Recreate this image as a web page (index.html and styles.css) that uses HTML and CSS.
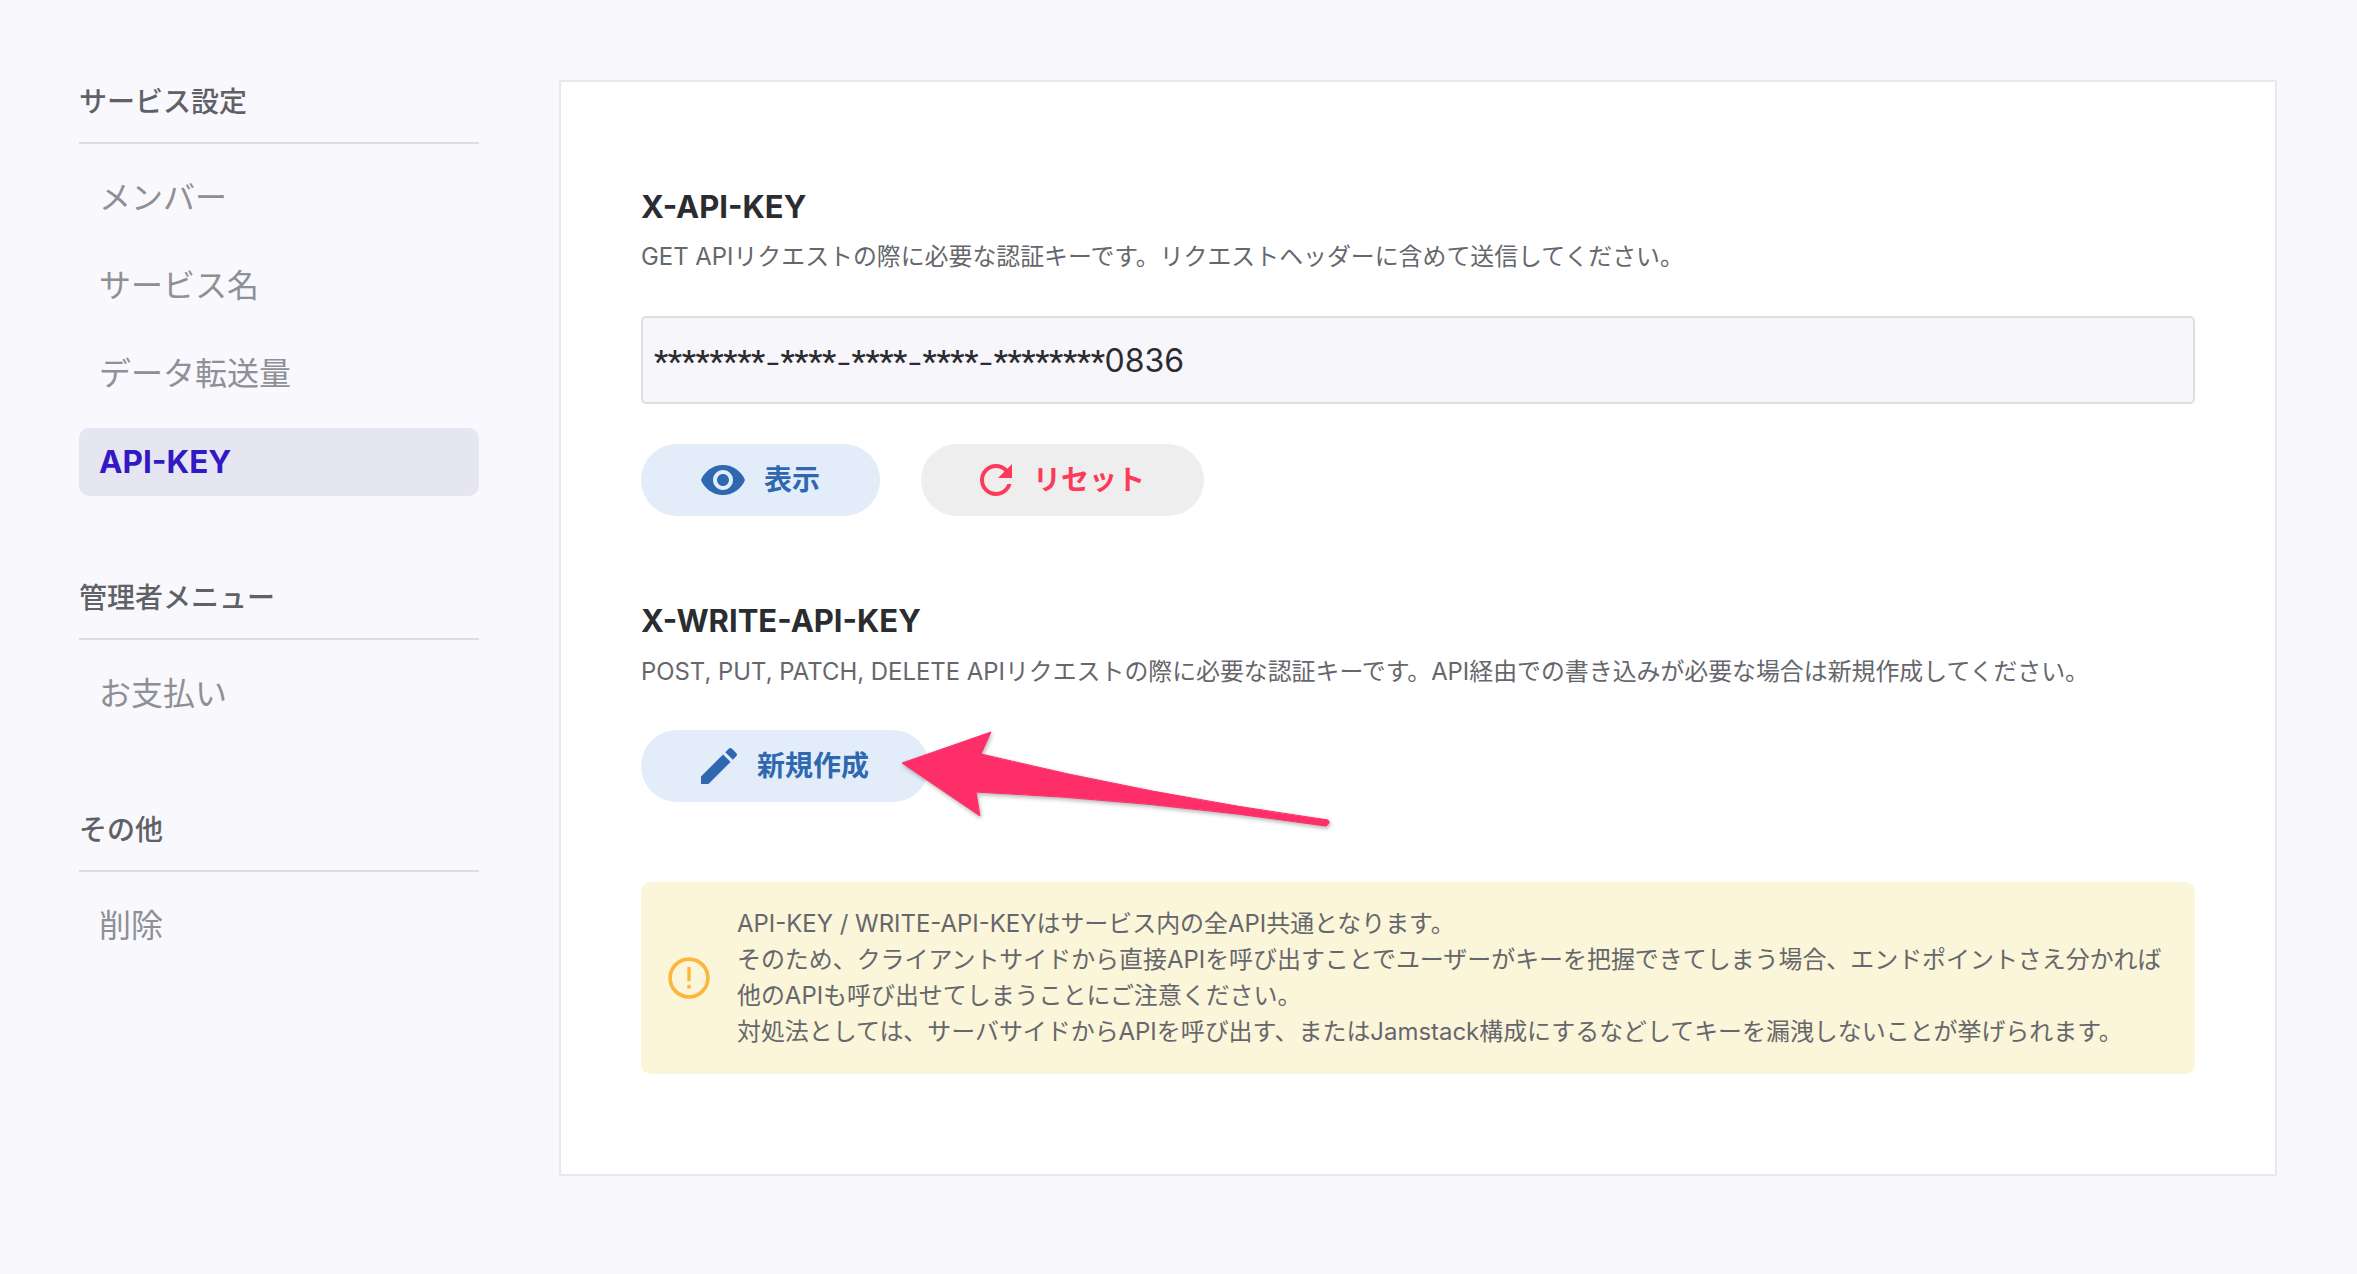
FILE: index.html
```html
<!DOCTYPE html>
<html>
<head>
    <title>API-KEY</title>
    <link rel="stylesheet" href="styles.css">
</head>
<body>
    <div class="page">
        <nav class="sidebar">
            <h3 class="side-title">サービス設定</h3>
            <a class="side-item">メンバー</a>
            <a class="side-item">サービス名</a>
            <a class="side-item">データ転送量</a>
            <a class="side-item active">API-KEY</a>

            <h3 class="side-title second">管理者メニュー</h3>
            <a class="side-item">お支払い</a>

            <h3 class="side-title third">その他</h3>
            <a class="side-item">削除</a>
        </nav>

        <main class="card">
            <h2 class="key-title">X-API-KEY</h2>
            <p class="key-desc">GET APIリクエストの際に必要な認証キーです。リクエストヘッダーに含めて送信してください。</p>
            <div class="key-input"><span class="masked">********<span class="sep">_</span>****<span class="sep">_</span>****<span class="sep">_</span>****<span class="sep">_</span>********</span>0836</div>
            <div class="btn-row">
                <button class="btn btn-show">
                    <svg class="icon" viewBox="0 0 24 24"><path d="M12 4.5C7 4.5 2.73 7.61 1 12c1.73 4.39 6 7.5 11 7.5s9.27-3.11 11-7.5c-1.73-4.39-6-7.5-11-7.5zM12 17c-2.76 0-5-2.24-5-5s2.24-5 5-5 5 2.24 5 5-2.24 5-5 5zm0-8c-1.66 0-3 1.34-3 3s1.34 3 3 3 3-1.34 3-3-1.34-3-3-3z"/></svg>
                    <span class="btn-label">表示</span>
                </button>
                <button class="btn btn-reset">
                    <svg class="icon" viewBox="0 0 24 24"><path d="M17.65 6.35C16.2 4.9 14.21 4 12 4c-4.42 0-7.99 3.58-7.99 8s3.57 8 7.99 8c3.73 0 6.84-2.55 7.73-6h-2.08c-.82 2.33-3.04 4-5.65 4-3.31 0-6-2.69-6-6s2.69-6 6-6c1.66 0 3.14.69 4.22 1.78L13 11h7V4l-2.35 2.35z"/></svg>
                    <span class="btn-label">リセット</span>
                </button>
            </div>

            <h2 class="key-title write">X-WRITE-API-KEY</h2>
            <p class="key-desc">POST, PUT, PATCH, DELETE APIリクエストの際に必要な認証キーです。API経由での書き込みが必要な場合は新規作成してください。</p>
            <div class="btn-row">
                <button class="btn btn-show btn-new">
                    <svg class="icon" viewBox="0 0 24 24"><path d="M3 17.25V21h3.75L17.81 9.94l-3.75-3.75L3 17.25zM20.71 7.04c.39-.39.39-1.02 0-1.41l-2.34-2.34c-.39-.39-1.02-.39-1.41 0l-1.83 1.83 3.75 3.75 1.83-1.83z"/></svg>
                    <span class="btn-label">新規作成</span>
                </button>
            </div>

            <div class="notice">
                <svg class="notice-icon" viewBox="0 0 40 40"><circle cx="20" cy="20" r="18" fill="none" stroke="#fbb73c" stroke-width="3.5"/><rect x="18.4" y="9.5" width="3.2" height="13.5" fill="#fbb73c"/><rect x="18.4" y="26.5" width="3.2" height="3.6" fill="#fbb73c"/></svg>
                <p class="notice-text">API-KEY / WRITE-API-KEYはサービス内の全API共通となります。<br>そのため、クライアントサイドから直接APIを呼び出すことでユーザーがキーを把握できてしまう場合、エンドポイントさえ分かれば<br>他のAPIも呼び出せてしまうことにご注意ください。<br>対処法としては、サーバサイドからAPIを呼び出す、またはJamstack構成にするなどしてキーを漏洩しないことが挙げられます。</p>
            </div>
        </main>
    </div>

    <!-- annotation arrow on top of the screenshot -->
    <svg class="arrow" width="2357" height="1274" viewBox="0 0 2357 1274">
        <path d="M902 763 L991 732 L981 754 Q1150 795 1328 820 Q1331 823 1326 826 Q1150 800 976 792 L980 816 Z" fill="#fe2e69" stroke="#fe2e69" stroke-width="1" stroke-linejoin="round"/>
    </svg>
</body>
</html>
```

FILE: styles.css
```css
* { box-sizing: border-box; }
html, body { margin: 0; height: 100%; }
body { background: #f8f8fd; color: #2b2c30; font-family: Inter, "Noto Sans CJK JP", sans-serif; overflow: hidden; }

.page { display: flex; align-items: flex-start; gap: 80px; padding: 80px 80px 0 79px; }

.sidebar { display: flex; flex-direction: column; flex: 0 0 400px; }
.side-title { margin: 0 0 20px; height: 64px; line-height: 44px; font-size: 28px; font-weight: 500; color: #606166; border-bottom: 2px solid #dedede; }
.side-title.second { margin-top: 81px; height: 63px; line-height: 42px; }
.side-title.third { margin-top: 60px; }
.side-item { display: block; height: 68px; margin-bottom: 20px; padding-left: 20px; line-height: 68px; font-size: 32px; color: #8f8f96; border-radius: 10px; }
.side-item.active { margin-bottom: 0; background: #e6e6f3; color: #3319c4; font-size: 31.5px; font-weight: 700; }

.card { flex: 1; height: 1096px; padding: 104px 80px 0; background: #fff; border: 2px solid #e8e8ee; }
.key-title { margin: 0; font-size: 31px; line-height: 42px; font-weight: 700; color: #2b2c30; }
.key-title.write { margin-top: 84px; }
.key-desc { margin: 11px 0 0; font-size: 23.9px; line-height: 36px; color: #66676c; }
.key-title.write + .key-desc { margin-top: 12px; }

.key-input { height: 88px; margin-top: 41px; padding-left: 11px; line-height: 86px; font-size: 32px; background: #f6f6fb; border: 2px solid #dedede; border-radius: 5px; color: #2b2c30; }
.masked { font-family: Roboto, sans-serif; font-weight: 500; letter-spacing: -0.33px; }
.sep { margin: 0 2.6px; font-size: 24px; line-height: 0; vertical-align: 9px; }

.btn-row { display: flex; gap: 41px; margin-top: 40px; }
.btn { display: flex; align-items: center; gap: 17px; height: 72px; padding: 0 60px 0 58px; border: none; border-radius: 36px; font-family: inherit; font-size: 28px; font-weight: 700; }
.btn-label { margin-top: -4px; }
.btn-show { background: #e3edf9; color: #2f68b1; }
.btn-reset { gap: 13px; padding: 0 59px 0 51px; background: #eeeeee; color: #fd3a57; }
.btn-new { gap: 14px; padding-left: 54px; }
.icon { width: 48px; height: 48px; fill: currentColor; flex: none; }

.notice { display: flex; align-items: center; gap: 27px; height: 192px; margin-top: 80px; padding: 0 10px 0 27px; background: #fbf5d9; border-radius: 10px; }
.notice-icon { width: 42px; height: 42px; flex: none; }
.notice-text { margin: 0; font-size: 23.95px; line-height: 36px; color: #66676c; }

.arrow { position: absolute; left: 0; top: 0; pointer-events: none; filter: drop-shadow(1px 2px 2px rgba(0,0,0,.3)); }
```
